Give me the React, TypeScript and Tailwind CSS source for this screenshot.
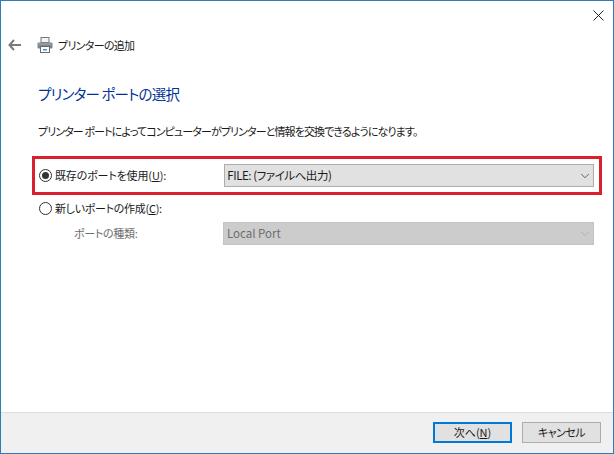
import { ChevronDown } from "lucide-react";

// Windows 10 "add printer" wizard, port selection page.

const font = "font-['Noto_Sans_CJK_JP','Noto_Sans',sans-serif] [font-feature-settings:'palt']";

function Radio({ checked }: { checked?: boolean }) {
  return (
    <span className="flex h-[13px] w-[13px] shrink-0 items-center justify-center rounded-full border border-[#333333] bg-white">
      {checked ? <span className="h-[7px] w-[7px] rounded-full bg-[#333333]" /> : null}
    </span>
  );
}

function Combo({ label, disabled }: { label: string; disabled?: boolean }) {
  return (
    <div
      className={
        disabled
          ? "flex h-[23px] w-[371px] items-center justify-between border border-[#c4c4c4] bg-[#cccccc] pl-[3px] pr-[1px] text-[#6d6d6d]"
          : "flex h-[23px] w-[371px] items-center justify-between border border-[#adadad] bg-[#e1e1e1] pl-[2px] pr-[1px] text-[#1a1a1a]"
      }
    >
      <span className={disabled ? "text-[11.5px]" : "text-[11.5px] tracking-[-0.45px]"}>{label}</span>
      <ChevronDown
        size={14}
        strokeWidth={1.25}
        className={disabled ? "text-[#a8a8a8]" : "text-[#333333]"}
      />
    </div>
  );
}

export default function App() {
  return (
    <div
      className={`flex h-[454px] w-[614px] flex-col overflow-hidden border border-[#2d7db8] bg-white text-[11px] leading-none text-[#1a1a1a] ${font}`}
    >
      <div className="flex h-[11px] shrink-0 justify-end pr-[9px] pt-[9px]">
        <svg width="11" height="11" viewBox="0 0 11 11" className="shrink-0">
          <path d="M0.5 0.5 L10.5 10.5 M10.5 0.5 L0.5 10.5" stroke="#222222" strokeWidth="1" fill="none" />
        </svg>
      </div>

      <div className="mt-[25px] flex h-[16px] items-center pl-[7px]">
        <svg width="14" height="12" viewBox="0 0 14 12" className="shrink-0">
          <path d="M6 1 L1.5 6 L6 11 M1.5 6 H13" stroke="#7a7a7a" strokeWidth="2" fill="none" />
        </svg>
        <svg width="16" height="16" viewBox="0 0 16 16" className="ml-[15px] shrink-0">
          <rect x="4" y="0.5" width="8" height="5" fill="#f4f4f4" stroke="#777777" />
          <rect x="0.5" y="5.5" width="15" height="6" rx="1" fill="#7d8790" />
          <rect x="1.5" y="6.5" width="13" height="1" fill="#aab2b9" />
          <rect x="3.5" y="9.5" width="9" height="6" fill="#ffffff" stroke="#6b6b6b" />
          <rect x="6" y="12" width="4" height="1.5" fill="#3f9cc0" />
        </svg>
        <span className="ml-[5px] tracking-[-0.7px]">プリンターの追加</span>
      </div>

      <h1 className="ml-[37px] mt-[31px] text-[14.5px] font-normal leading-[20px] tracking-[-0.8px] text-[#003399]">
        プリンター ポートの選択
      </h1>
      <p className="ml-[37px] mt-[20px] leading-[14px] tracking-[-0.9px]">
        プリンター ポートによってコンピューターがプリンターと情報を交換できるようになります。
      </p>

      <div className="ml-[31px] mt-[18px] flex h-[39px] w-[570px] items-center border-[3px] border-[#d9202c] pl-[4px] pr-[5px]">
        <Radio checked />
        <span className="ml-[3px] w-[170px] tracking-[-0.15px]">
          既存のポートを使用(<span className="underline">U</span>):
        </span>
        <Combo label="FILE: (ファイルへ出力)" />
      </div>

      <div className="ml-[38px] mt-[7px] flex items-center">
        <Radio />
        <span className="ml-[3px] tracking-[-0.3px]">
          新しいポートの作成(<span className="underline">C</span>):
        </span>
      </div>

      <div className="ml-[73px] mt-[7px] flex items-center text-[#6d6d6d]">
        <span className="w-[149px] tracking-[-0.3px]">ポートの種類:</span>
        <Combo label="Local Port" disabled />
      </div>

      <div className="mt-auto flex h-[41px] items-start justify-end gap-[10px] border-t border-[#dfdfdf] bg-[#f0f0f0] pr-[12px] pt-[9px]">
        <button
          type="button"
          className="flex h-[21px] w-[79px] items-center justify-center border-2 border-[#0078d7] bg-[#e1e1e1]"
        >
          次へ(<span className="underline">N</span>)
        </button>
        <button
          type="button"
          className="flex h-[21px] w-[79px] items-center justify-center border border-[#adadad] bg-[#e1e1e1] tracking-[-0.5px]"
        >
          キャンセル
        </button>
      </div>
    </div>
  );
}
